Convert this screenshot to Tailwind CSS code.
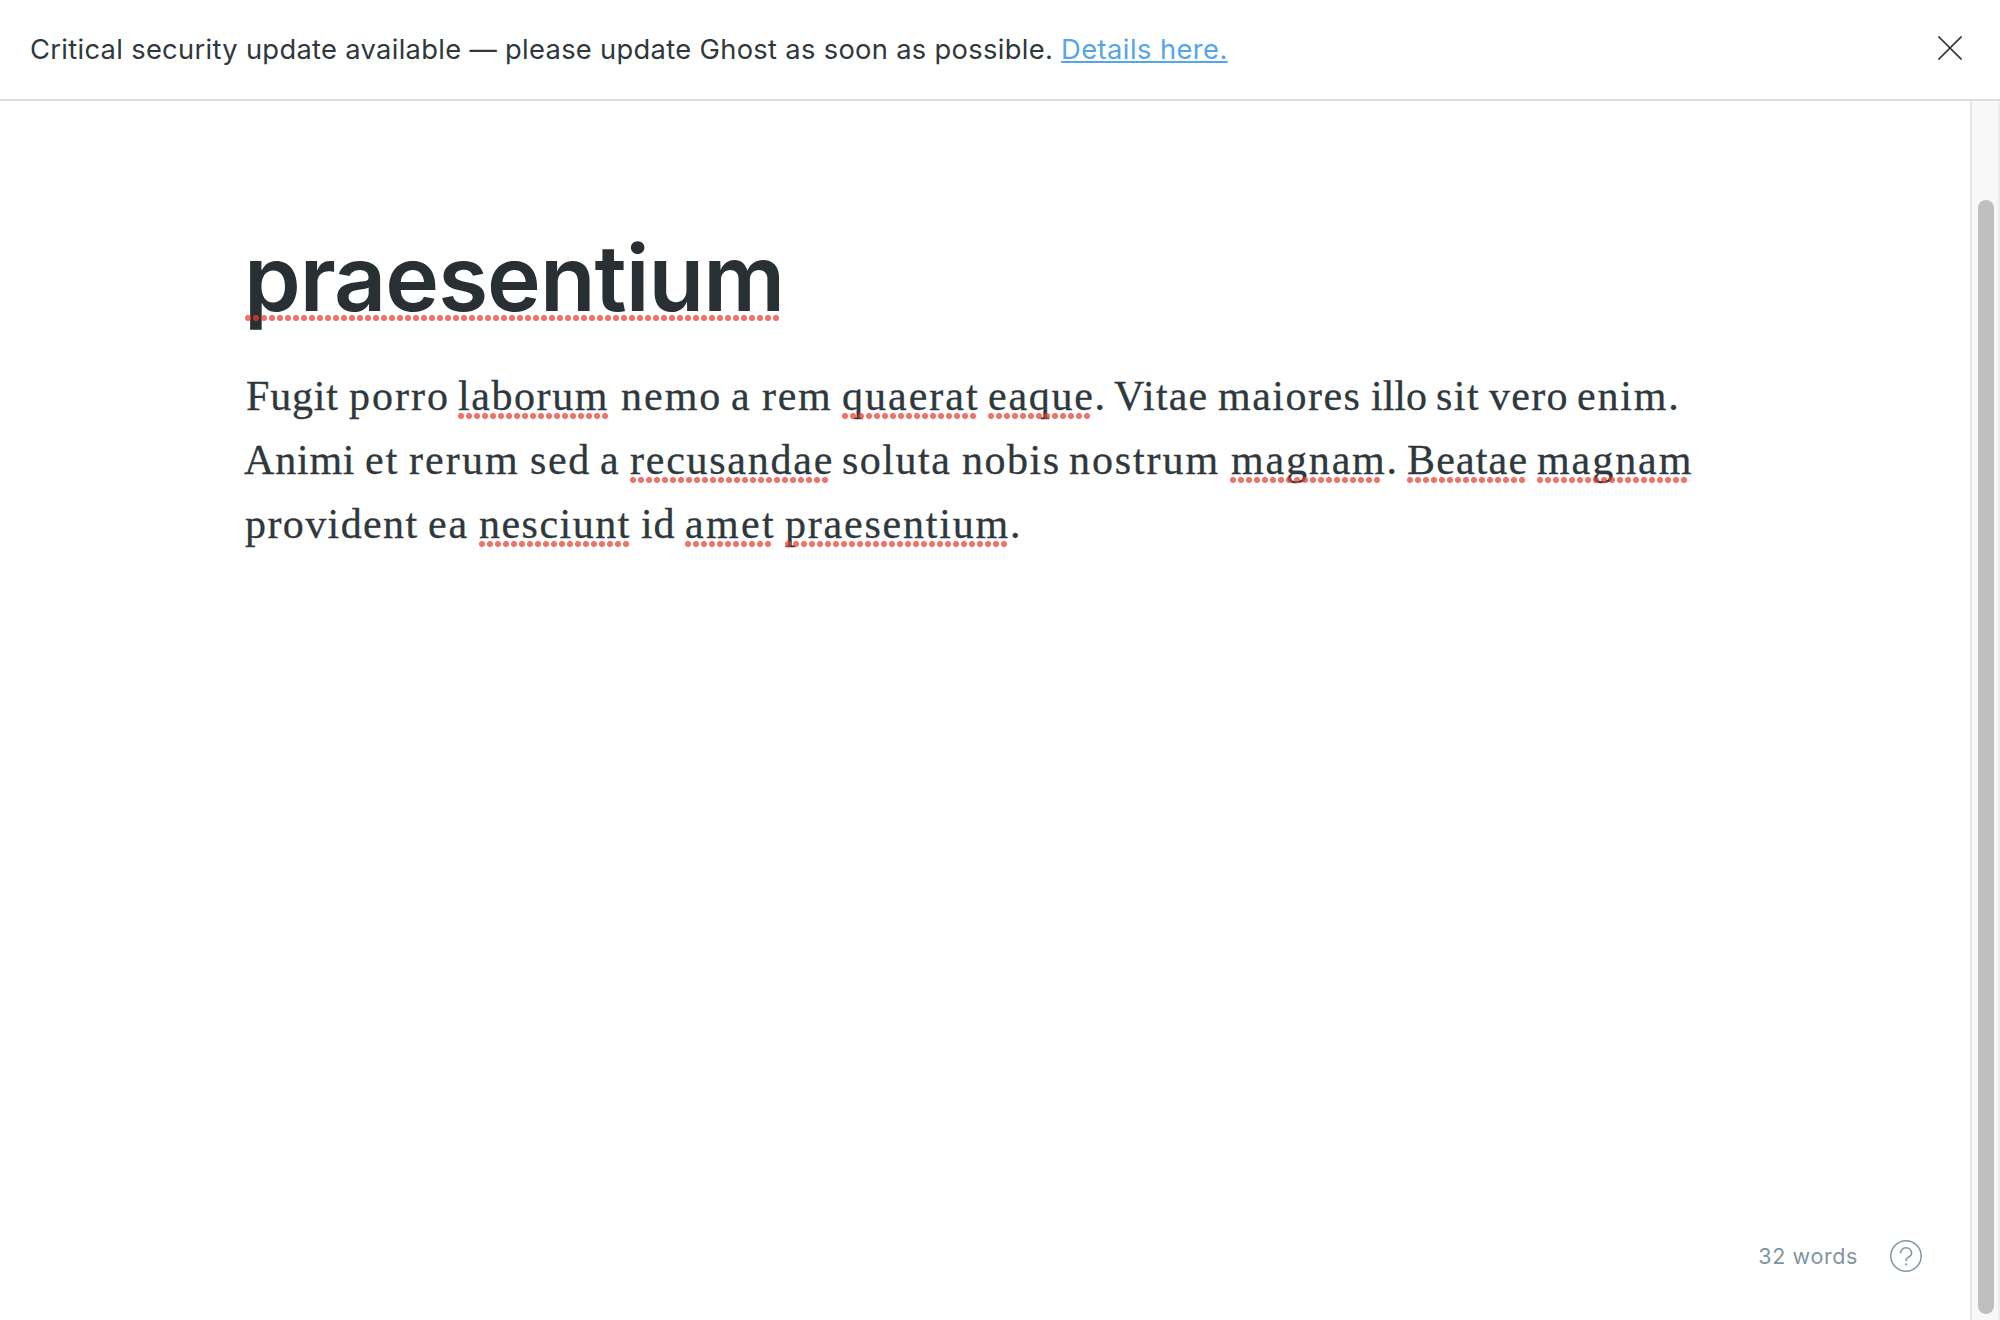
<!DOCTYPE html>
<html lang="en">
<head>
<meta charset="utf-8">
<title>praesentium - Ghost editor</title>
<script src="https://cdn.jsdelivr.net/npm/@tailwindcss/browser@4"></script>
</head>
<body class="flex h-screen flex-col overflow-hidden bg-white font-['Inter',sans-serif] text-[#2f383c]">

<!-- Update notice -->
<header class="flex h-[101px] shrink-0 items-center justify-between border-b-2 border-[#dcdedd] pl-[30px] pr-[38px]">
  <p class="mt-px whitespace-pre text-[27.3px] leading-[34px] tracking-[0.32px]">Critical security update available — please update Ghost as soon as possible. <a href="#" class="tracking-[0.44px] text-[#54a5ea] underline decoration-2 underline-offset-2">Details here.</a></p>
  <button aria-label="Close" class="mb-[3px] block size-6">
    <svg class="block size-6" viewBox="0 0 24 24" fill="none" stroke="#2f383c" stroke-width="1.6"><path d="M.4.4l23.2 23.2M23.6.4L.4 23.6"/></svg>
  </button>
</header>

<div class="flex min-h-0 flex-1">
  <!-- Editor -->
  <main class="flex min-w-0 flex-1 flex-col">
    <h1 class="mt-[121px] h-[112px] pl-[245px] text-[91px] leading-[112px] font-semibold tracking-[-1px] text-[#283034]"><span class="relative -ml-px inline-block">praesentium<i class="absolute top-[93px] left-px h-[6px] w-[535px] bg-[radial-gradient(circle_at_3px_3px,rgba(235,60,48,0.72)_2.75px,transparent_3.25px)] bg-[length:8px_6px]"></i></span></h1>

    <div class="mt-[30px] pl-[244px] font-['Liberation_Serif',serif] text-[42px] leading-[64px] [-webkit-text-stroke:0.3px_#2f383c]">
      <div class="flex whitespace-nowrap pl-0.5">
        <span class="w-[103px] tracking-[0.8px]">Fugit </span>
        <span class="w-[109px] tracking-[2px]">porro </span>
        <span class="relative w-[163px] tracking-[1.57px]">laborum <i class="absolute top-[49px] left-0 h-[6px] w-[152px] bg-[radial-gradient(circle_at_3px_3px,rgba(235,60,48,0.72)_2.75px,transparent_3.25px)] bg-[length:8px_6px]"></i></span>
        <span class="w-[110px] tracking-[2px]">nemo </span>
        <span class="w-[31px]">a </span>
        <span class="w-[80px] tracking-[1.7px]">rem </span>
        <span class="relative w-[146px] tracking-[2px]">quaerat <i class="absolute top-[49px] left-0 h-[6px] w-[134px] bg-[radial-gradient(circle_at_3px_3px,rgba(235,60,48,0.72)_2.75px,transparent_3.25px)] bg-[length:8px_6px]"></i></span>
        <span class="relative w-[126px] tracking-[1.74px]">eaque. <i class="absolute top-[49px] left-0 h-[6px] w-[104px] bg-[radial-gradient(circle_at_3px_3px,rgba(235,60,48,0.72)_2.75px,transparent_3.25px)] bg-[length:8px_6px]"></i></span>
        <span class="w-[104px] tracking-[1.2px]">Vitae </span>
        <span class="w-[153px] tracking-[1.5px]">maiores </span>
        <span class="w-[65px]">illo </span>
        <span class="w-[53px] tracking-[1.5px]">sit </span>
        <span class="w-[88px] tracking-[1.27px]">vero </span>
        <span class="tracking-[1.8px]">enim.</span>
      </div>
      <div class="flex whitespace-nowrap">
        <span class="w-[121px] tracking-[0.8px]">Animi </span>
        <span class="w-[44px] tracking-[2px]">et </span>
        <span class="w-[121px] tracking-[2.1px]">rerum </span>
        <span class="w-[70px] tracking-[1.65px]">sed </span>
        <span class="w-[30px]">a </span>
        <span class="relative w-[212px] tracking-[1.75px]">recusandae <i class="absolute top-[49px] left-0 h-[6px] w-[198px] bg-[radial-gradient(circle_at_3px_3px,rgba(235,60,48,0.72)_2.75px,transparent_3.25px)] bg-[length:8px_6px]"></i></span>
        <span class="w-[120px] tracking-[1.5px]">soluta </span>
        <span class="w-[107px] tracking-[1.5px]">nobis </span>
        <span class="w-[162px] tracking-[1.9px]">nostrum </span>
        <span class="relative w-[176px] tracking-[1.83px]">magnam. <i class="absolute top-[49px] -left-px h-[6px] w-[150px] bg-[radial-gradient(circle_at_3px_3px,rgba(235,60,48,0.72)_2.75px,transparent_3.25px)] bg-[length:8px_6px]"></i></span>
        <span class="relative w-[130px] tracking-[1.16px]">Beatae <i class="absolute top-[49px] left-0 h-[6px] w-[118px] bg-[radial-gradient(circle_at_3px_3px,rgba(235,60,48,0.72)_2.75px,transparent_3.25px)] bg-[length:8px_6px]"></i></span>
        <span class="relative tracking-[1.94px]">magnam<i class="absolute top-[49px] left-0 h-[6px] w-[150px] bg-[radial-gradient(circle_at_3px_3px,rgba(235,60,48,0.72)_2.75px,transparent_3.25px)] bg-[length:8px_6px]"></i></span>
      </div>
      <div class="flex whitespace-nowrap pl-px">
        <span class="w-[183px] tracking-[1.4px]">provident </span>
        <span class="w-[51px] tracking-[1.8px]">ea </span>
        <span class="relative w-[162px] tracking-[1.48px]">nesciunt <i class="absolute top-[49px] left-0 h-[6px] w-[150px] bg-[radial-gradient(circle_at_3px_3px,rgba(235,60,48,0.72)_2.75px,transparent_3.25px)] bg-[length:8px_6px]"></i></span>
        <span class="w-[44px] tracking-[0.9px]">id </span>
        <span class="relative w-[100px] tracking-[2.33px]">amet <i class="absolute top-[49px] left-0 h-[6px] w-[88px] bg-[radial-gradient(circle_at_3px_3px,rgba(235,60,48,0.72)_2.75px,transparent_3.25px)] bg-[length:8px_6px]"></i></span>
        <span class="relative tracking-[1.79px]">praesentium.<i class="absolute top-[49px] left-0 h-[6px] w-[222px] bg-[radial-gradient(circle_at_3px_3px,rgba(235,60,48,0.72)_2.75px,transparent_3.25px)] bg-[length:8px_6px]"></i></span>
      </div>
    </div>

    <!-- Status -->
    <footer class="mt-auto mb-12 flex items-center justify-end gap-8 pr-12 text-[#7f95a1]">
      <span class="text-[21.5px] leading-8 tracking-[0.62px]">32 words</span>
      <svg class="block size-8" viewBox="0 0 32 32" fill="none" stroke="currentColor" stroke-width="1.5">
        <circle cx="16" cy="16" r="15.2"/>
        <path d="M10.6 13.5v-.4c0-3.1 2.4-5.4 5.5-5.4s5.5 2.3 5.5 5.2c0 2.7-1.8 3.6-3.5 4.5-1.3.7-2 1.4-2 2.7v1.1"/>
        <path d="M16.1 23.4v1.9" stroke-width="1.9"/>
      </svg>
    </footer>
  </main>

  <!-- Scrollbar -->
  <div class="flex w-[30px] shrink-0 border-x-2 border-l-[#e5e5e5] border-r-[#ececec] bg-[#f8f8f8] pt-[99px] pb-1.5 pl-1.5">
    <div class="w-4 rounded-full bg-[#bfbfbf]"></div>
  </div>
</div>
</body>
</html>
